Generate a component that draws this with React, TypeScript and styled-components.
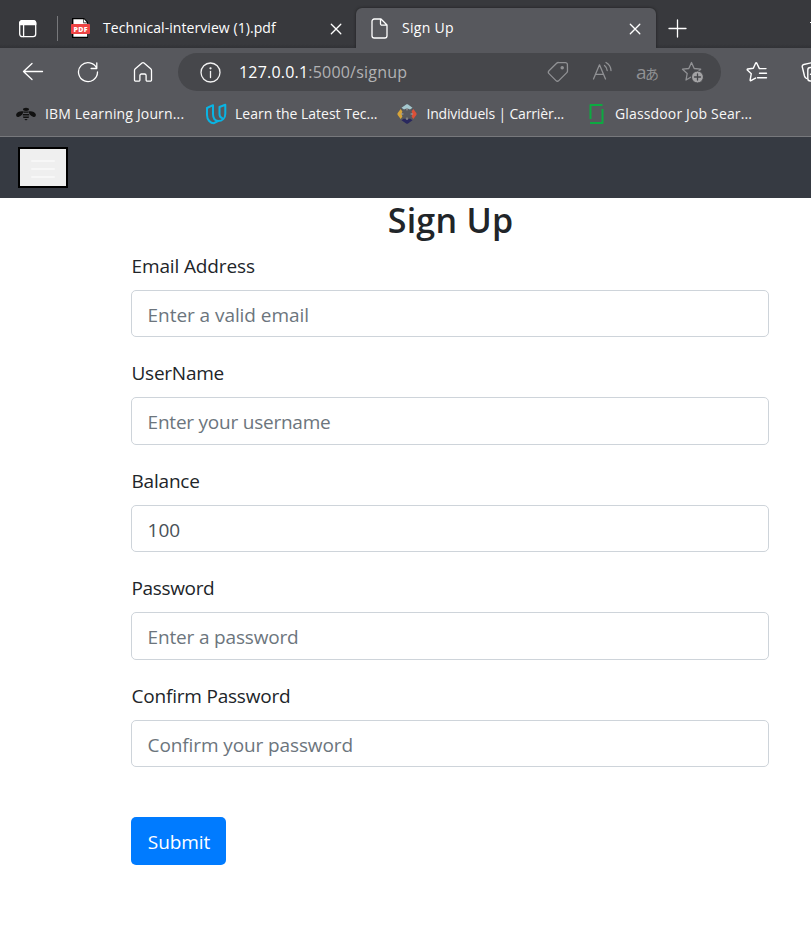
import React from 'react';
import styled, { createGlobalStyle } from 'styled-components';

const GlobalStyle = createGlobalStyle`
  *, *::before, *::after { box-sizing: border-box; }
  body {
    margin: 0;
    background: #fff;
    overflow: hidden;
    font-family: "Open Sans", "Noto Sans", sans-serif;
    color: #212529;
  }
`;

const Window = styled.div`
  width: 811px;
  height: 934px;
  overflow: hidden;
  background: #fff;
`;

const TabStrip = styled.div`
  display: flex;
  align-items: flex-end;
  height: 48px;
  background: linear-gradient(#38393d 0 44px, #313236 48px);
`;

const TabActions = styled.div`
  display: flex;
  align-items: center;
  width: 58px;
  height: 40px;
  padding-left: 18px;
  gap: 20px;
`;

const Divider = styled.div`
  width: 1px;
  height: 25px;
  background: #77787b;
`;

const Tab = styled.div<{ $active?: boolean; $width: number }>`
  display: flex;
  align-items: center;
  width: ${(p) => p.$width}px;
  height: 40px;
  padding-left: ${(p) => (p.$active ? 15 : 13)}px;
  padding-right: ${(p) => (p.$active ? 15 : 14)}px;
  border-radius: 6px 6px 0 0;
  background: ${(p) => (p.$active ? '#57585d' : 'transparent')};
  box-shadow: ${(p) => (p.$active ? '0 0 3px rgba(0, 0, 0, 0.5)' : 'none')};
`;

const Label = styled.span<{ $spacing?: number }>`
  letter-spacing: ${(p) => p.$spacing ?? 0}px;
  white-space: nowrap;
`;

const TabTitle = styled(Label)<{ $gap: number }>`
  flex: 1;
  margin-left: ${(p) => p.$gap}px;
  font-size: 14px;
  line-height: 20px;
  color: #fff;
`;

const NewTab = styled.div`
  display: flex;
  align-items: center;
  height: 40px;
  padding-left: 12px;
`;

const WindowEdge = styled.div`
  width: 1px;
  height: 1px;
  margin: 0 0 25px auto;
  background: #fff;
`;

const Toolbar = styled.div`
  position: relative;
  display: flex;
  align-items: center;
  height: 48px;
  padding-left: 22px;
  background: #57585d;
`;

const NavButtons = styled.div`
  display: flex;
  align-items: center;
  flex: none;
  width: 156px;
  gap: 33px;
`;

const AddressBar = styled.div`
  display: flex;
  align-items: center;
  flex: none;
  width: 543px;
  height: 38px;
  padding: 0 17px 0 22px;
  border-radius: 19px;
  background: #46474b;
`;

const Url = styled(Label)`
  flex: 1;
  margin-left: 18px;
  font-size: 16px;
  line-height: 22px;
  color: #b2b2b4;
`;

const Host = styled.span`
  color: #fff;
`;

const AddressActions = styled.div`
  display: flex;
  align-items: center;
  gap: 23px;
`;

const ToolbarActions = styled.div`
  display: flex;
  align-items: center;
  flex: none;
  margin-left: 25px;
  gap: 33px;
`;

const Bookmarks = styled.div`
  display: flex;
  height: 41px;
  padding-left: 15px;
  border-bottom: 1px solid #77787c;
  background: #57585d;
`;

const Bookmark = styled.div<{ $width: number }>`
  display: flex;
  align-items: center;
  flex: none;
  width: ${(p) => p.$width}px;
  height: 36px;
  gap: 8px;
  font-size: 14px;
  line-height: 20px;
  color: #f7f7f7;
`;

const Navbar = styled.nav`
  display: flex;
  align-items: center;
  height: 61px;
  padding-left: 18px;
  background: #363a42;
`;

const Toggler = styled.button`
  display: flex;
  flex-direction: column;
  align-items: center;
  justify-content: center;
  width: 50px;
  height: 41px;
  padding: 2px 0 0;
  gap: 6px;
  border: 2px solid #000;
  background: #efefef;
`;

const TogglerBar = styled.span`
  width: 24px;
  height: 2px;
  border-radius: 1px;
  background: #f7f7f7;
`;

const Page = styled.main`
  width: 638px;
  margin-left: 131px;
`;

const Heading = styled.h3`
  height: 42px;
  margin: 0 0 9.9px;
  padding-left: 1px;
  font-size: 34px;
  font-weight: 600;
  line-height: 45px;
  letter-spacing: 0.25px;
  text-align: center;
`;

const Field = styled.div`
  margin-bottom: 20px;
`;

const FieldLabel = styled.label<{ $spacing: number }>`
  display: block;
  height: 30px;
  margin-bottom: 10px;
  padding-left: 0.5px;
  font-size: 19px;
  line-height: 32px;
  letter-spacing: ${(p) => p.$spacing}px;
`;

const Input = styled.input<{ $spacing: number }>`
  display: block;
  width: 100%;
  height: 47.5px;
  padding: 2px 15.6px 0;
  border: 1px solid #ced4da;
  border-radius: 5px;
  background: #fff;
  font: 19px "Open Sans", "Noto Sans", sans-serif;
  letter-spacing: ${(p) => p.$spacing}px;
  color: #495057;
  outline: none;

  &::placeholder {
    color: #6c757d;
    opacity: 1;
  }
`;

const Submit = styled.button`
  width: 95px;
  height: 47.5px;
  margin-top: 30px;
  padding: 2px 0 0 1px;
  border: 0;
  border-radius: 5px;
  background: #007bff;
  font: 19px "Open Sans", "Noto Sans", sans-serif;
  letter-spacing: -0.1px;
  color: #fff;
`;

const Icon = styled.svg`
  display: block;
  flex: none;
  fill: none;
  stroke-linecap: round;
  stroke-linejoin: round;
`;

const TabMenuIcon = () => (
  <Icon width="19" height="19" viewBox="0 0 19 19" stroke="#fff" strokeWidth="1.3">
    <rect x="1.7" y="1.7" width="16" height="16" rx="2.6" />
    <path d="M1.7 5.6V4a2.3 2.3 0 0 1 2.3-2.3h11.4A2.3 2.3 0 0 1 17.7 4v1.6z" fill="#fff" />
    <path d="M5.6 6v11.5" />
  </Icon>
);

const PdfIcon = () => (
  <Icon width="19" height="20" viewBox="0 0 19 20">
    <path d="M1 0h12l4 4v16H1z" fill="#000" />
    <path d="M2.4 1.2h10v4h3.8v13.6H2.4z" fill="#fff" />
    <path d="M13 1.2v3.2h3z" fill="#fff" />
    <rect y="6" width="19" height="10" rx="1" fill="#ef4444" />
    <text x="9.6" y="13.7" textAnchor="middle" fontSize="7" fontWeight="800" fontFamily="Open Sans" letterSpacing=".3" fill="#fff">PDF</text>
  </Icon>
);

const CloseIcon = () => (
  <Icon width="12" height="14" viewBox="0 0 12 14" stroke="#fff" strokeWidth="1.3">
    <path d="M1.300 3.200l9.500 9.500M10.800 3.200l-9.500 9.500" />
  </Icon>
);

const PageIcon = () => (
  <Icon width="17" height="21" viewBox="0 0 17 21" stroke="#fff" strokeWidth="1.3">
    <path d="M3.300 1H10l6 6v10.700a2.300 2.300 0 0 1-2.300 2.300H3.300A2.300 2.300 0 0 1 1 17.700V3.300A2.300 2.300 0 0 1 3.300 1M9.500 1v4.700a1.500 1.500 0 0 0 1.500 1.500h5" />
  </Icon>
);

const PlusIcon = () => (
  <Icon width="19" height="19" viewBox="0 0 19 19" stroke="#fff" strokeWidth="1.3">
    <path d="M9.500 1v17M1 9.500h17" />
  </Icon>
);

const BackIcon = () => (
  <Icon width="22" height="20" viewBox="0 0 22 20" stroke="#fff" strokeWidth="1.3">
    <path d="M10 1.500L1.500 9.500l8.500 8M1.500 9.500h19" />
  </Icon>
);

const ReloadIcon = () => (
  <Icon width="22" height="22" viewBox="0 0 22 22" stroke="#fff" strokeWidth="1.3">
    <path d="M19.800 7.500A9.500 9.500 0 1 0 20.500 11M19.800 1.800v5.700h-5.700" />
  </Icon>
);

const HomeIcon = () => (
  <Icon width="22" height="22" viewBox="0 0 22 22" stroke="#fff" strokeWidth="1.3">
    <path d="M2.500 9.500c0-.7.3-1.200.8-1.700L10 2c.6-.5 1.400-.5 2 0l6.700 5.800c.5.500.8 1 .8 1.700v9.500a1.200 1.200 0 0 1-1.200 1.200h-3a1.200 1.200 0 0 1-1.200-1.200v-4.500a1.500 1.500 0 0 0-1.500-1.500h-3.200a1.500 1.500 0 0 0-1.500 1.500V19a1.200 1.200 0 0 1-1.200 1.200h-3A1.200 1.200 0 0 1 2.500 19z" />
  </Icon>
);

const InfoIcon = () => (
  <Icon width="21" height="21" viewBox="0 0 21 21" stroke="#f2f2f2" strokeWidth="1.3">
    <circle cx="10.500" cy="10.500" r="9.500" />
    <path d="M10.500 9.500v6" />
    <circle cx="10.500" cy="6.300" r=".5" fill="#fff" />
  </Icon>
);

const TagIcon = () => (
  <Icon width="22" height="22" viewBox="0 0 22 22" stroke="#909194" strokeWidth="1.3">
    <path d="M11.500 1.500l6.900.1a2 2 0 0 1 2 2l.1 6.200a2.500 2.500 0 0 1-.7 1.800l-8 8a2 2 0 0 1-2.800 0l-7-7a2 2 0 0 1 0-2.800l7.600-7.600a2.500 2.500 0 0 1 1.900-.7z" />
    <circle cx="15.200" cy="6.800" r="1.100" fill="#909194" />
  </Icon>
);

const ReadAloudIcon = () => (
  <Icon width="21" height="22" viewBox="0 0 21 22" stroke="#909194" strokeWidth="1.3">
    <path d="M1.500 18L7.500 3.800 13.500 18M3.500 13.300h8M12.500 4.500c1.700 1.300 2.500 2.800 2.700 5M14 1.500c3.200 1.800 4.800 4.500 5 8" />
  </Icon>
);

const TranslateLabel = styled.span`
  display: flex;
  align-items: baseline;
  width: 22px;
  font: 19px/22px "Open Sans", sans-serif;
  white-space: nowrap;
  color: #909194;
`;

const TranslateKana = styled.span`
  margin-left: -1.500px;
  font: 14px/22px "Noto Sans CJK JP", sans-serif;
`;

const StarAddIcon = () => (
  <Icon width="23" height="23" viewBox="0 0 23 23" stroke="#909194" strokeWidth="1.3">
    <path d="M10.500 1.500l2.700 6 6.500.7-4.800 4.300 1.300 6.500-5.700-3.200L5 19l1.200-6.500L1.500 8.200l6.300-.7z" />
    <circle cx="16.500" cy="16" r="6" fill="#a3a3a5" stroke="#46474b" strokeWidth="1" />
    <path d="M16.500 13v6M13.500 16h6" stroke="#46474b" />
  </Icon>
);

const FavoritesIcon = () => (
  <Icon width="22" height="22" viewBox="0 0 22 22" stroke="#fff" strokeWidth="1.4">
    <path d="M20 7.600h-6.600L10.700 2a.6.600 0 0 0-1 0L7.300 7.300l-5.600.7c-.5.100-.7.600-.4 1l4 3.700-1.200 6.400c0 .5.400.8.800.6l4.600-2.600M13.500 12.200H20.500M11.500 16.800h9" />
  </Icon>
);

const CollectionsIcon = () => (
  <Icon width="22" height="22" viewBox="0 0 22 22" stroke="#fff" strokeWidth="1.4">
    <path d="M5.500 17.500a4 4 0 0 1-2-2.500L1.300 6a2 2 0 0 1 1.500-2.500l10-2.300" />
    <rect x="6.800" y="6.500" width="13.500" height="13.500" rx="2.500" />
    <path d="M9.500 13.200h8M13.500 9.500v7.500" />
  </Icon>
);

const BeeIcon = () => (
  <Icon width="22" height="22" viewBox="0 0 22 22">
    <path d="M8.500 8.500C6 7.500 2 8.800 1.200 11.200c-.4 1.800.8 3.300 2.800 2.500C6 13 7.800 11.500 8.500 8.500zM13.500 8.500c2.500-1 6.500.3 7.300 2.700.4 1.800-.8 3.300-2.800 2.500-2-.7-3.800-2.200-4.500-5.200z" fill="#111" />
    <ellipse cx="11" cy="6.300" rx="3" ry="1.600" fill="#111" />
    <path d="M8.500 8.500h5v1.200h-5zM7.800 11h6.400v1.400H7.800zM7.800 13.500h6.400L13.500 15h-5zM9.200 16h3.600L11 17.500z" fill="#111" />
  </Icon>
);

const UdacityIcon = () => (
  <Icon width="22" height="22" viewBox="0 0 22 22" stroke="#09b4e4" strokeWidth="2">
    <path d="M8 2.200L2 5v7c0 5 3.500 8.200 7 8.200l4-2.200C10 17.500 8 15 8 11z" />
    <path d="M13 18c4.300 0 7.300-3 7.300-7.300V1.800L14.500 4v7c0 2.500 1 3.500 2.500 4" />
  </Icon>
);

const DiamondIcon = () => (
  <Icon width="22" height="22" viewBox="0 0 22 22">
    <path d="M5.500 4.800L10.500 1.200h1.200l4.800 3.600-2.500 1.700-3-1.200-3 1.200z" fill="#a5c8cf" />
    <path d="M17.300 6l3.200 4.300v1.400L17.300 16l-1.700-2.500.9-2.500-.9-2.500z" fill="#dc5038" />
    <path d="M16.500 17.200l-4.800 3.600h-1.200l-5-3.600L8 15.500l3 1.200 3-1.200z" fill="#29285e" />
    <path d="M4.700 16l-3.200-4.300v-1.400L4.700 6l1.700 2.500-.9 2.500.9 2.500z" fill="#d6a43a" />
    <path d="M11 5.500v1.500M11 15v1.500M5.500 11h1.500M15 11h1.500" stroke="#aaa" />
  </Icon>
);

const GlassdoorIcon = () => (
  <Icon width="22" height="22" viewBox="0 0 22 22" stroke="#0caa41" strokeWidth="2">
    <path d="M17.500 2H5.500v14M5 20h12.500V6" strokeLinecap="butt" />
  </Icon>
);

const bookmarks = [
  { title: 'IBM Learning Journ...', width: 190, spacing: 0.16, icon: <BeeIcon /> },
  { title: 'Learn the Latest Tec...', width: 191.4, spacing: 0, icon: <UdacityIcon /> },
  { title: 'Individuels | Carrièr...', width: 188.6, spacing: -0.16, icon: <DiamondIcon /> },
  { title: 'Glassdoor Job Sear...', width: 190, spacing: 0.15, icon: <GlassdoorIcon /> },
];

const fields = [
  { label: 'Email Address', labelSpacing: -0.13, placeholder: 'Enter a valid email', spacing: -0.06 },
  { label: 'UserName', labelSpacing: -0.25, placeholder: 'Enter your username', spacing: -0.23 },
  { label: 'Balance', labelSpacing: -0.2, value: '100', spacing: 0 },
  { label: 'Password', labelSpacing: -0.35, placeholder: 'Enter a password', spacing: -0.17 },
  { label: 'Confirm Password', labelSpacing: -0.2, placeholder: 'Confirm your password', spacing: -0.11 },
];

export default function App() {
  return (
    <Window>
      <GlobalStyle />
      <TabStrip>
        <TabActions>
          <TabMenuIcon />
          <Divider />
        </TabActions>
        <Tab $width={298}>
          <PdfIcon />
          <TabTitle $gap={13} $spacing={0.07}>Technical-interview (1).pdf</TabTitle>
          <CloseIcon />
        </Tab>
        <Tab $active $width={300}>
          <PageIcon />
          <TabTitle $gap={14} $spacing={0.3}>Sign Up</TabTitle>
          <CloseIcon />
        </Tab>
        <NewTab>
          <PlusIcon />
        </NewTab>
        <WindowEdge />
      </TabStrip>
      <Toolbar>
        <NavButtons>
          <BackIcon />
          <ReloadIcon />
          <HomeIcon />
        </NavButtons>
        <AddressBar>
          <InfoIcon />
          <Url $spacing={0.2}>
            <Host>127.0.0.1</Host>:5000/signup
          </Url>
          <AddressActions>
            <TagIcon />
            <ReadAloudIcon />
            <TranslateLabel>a<TranslateKana>あ</TranslateKana></TranslateLabel>
            <StarAddIcon />
          </AddressActions>
        </AddressBar>
        <ToolbarActions>
          <FavoritesIcon />
          <CollectionsIcon />
        </ToolbarActions>
      </Toolbar>
      <Bookmarks>
        {bookmarks.map((b) => (
          <Bookmark key={b.title} $width={b.width}>
            {b.icon}
            <Label $spacing={b.spacing}>{b.title}</Label>
          </Bookmark>
        ))}
      </Bookmarks>
      <Navbar>
        <Toggler aria-label="Toggle navigation">
          <TogglerBar />
          <TogglerBar />
          <TogglerBar />
        </Toggler>
      </Navbar>
      <Page>
        <Heading>Sign Up</Heading>
        {fields.map((f) => (
          <Field key={f.label}>
            <FieldLabel $spacing={f.labelSpacing}>{f.label}</FieldLabel>
            <Input $spacing={f.spacing} placeholder={f.placeholder} defaultValue={f.value} />
          </Field>
        ))}
        <Submit>Submit</Submit>
      </Page>
    </Window>
  );
}
